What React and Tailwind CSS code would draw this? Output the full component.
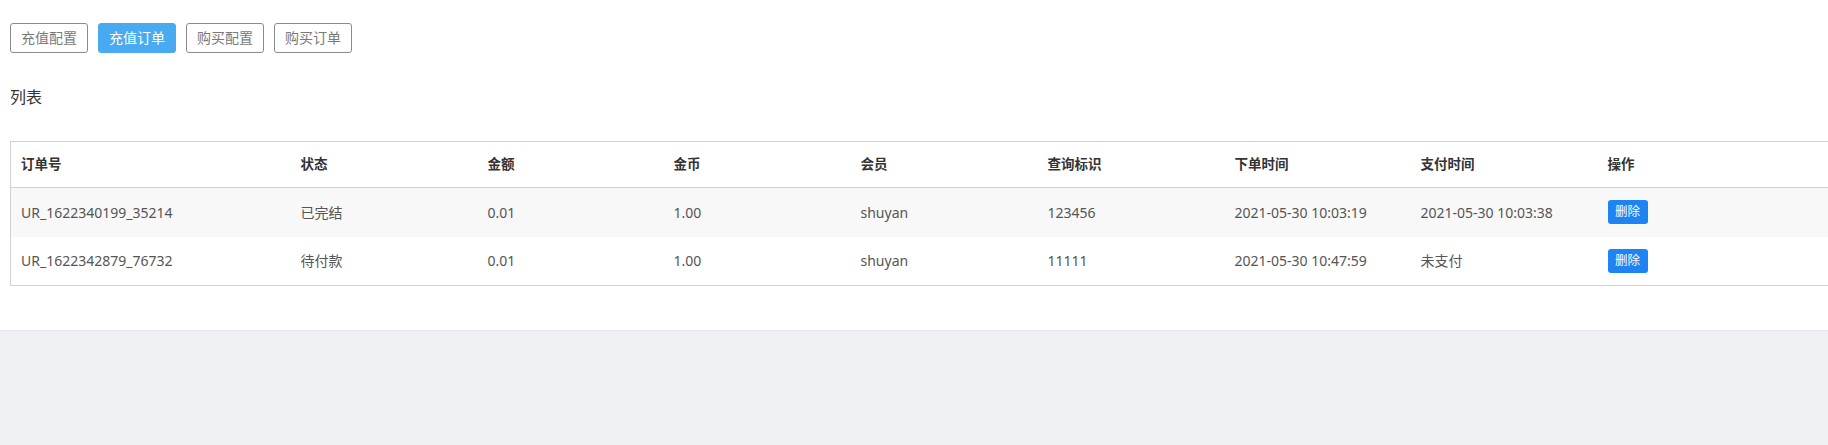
import React from 'react';

const tabs = [
  { label: '充值配置', active: false },
  { label: '充值订单', active: true },
  { label: '购买配置', active: false },
  { label: '购买订单', active: false },
];

const columns = ['订单号', '状态', '金额', '金币', '会员', '查询标识', '下单时间', '支付时间', '操作'];
const widths = ['w-[280px]', 'w-[187px]', 'w-[186px]', 'w-[187px]', 'w-[187px]', 'w-[187px]', 'w-[186px]', 'w-[187px]', 'w-[313px]'];

const orders = [
  { id: 'UR_1622340199_35214', status: '已完结', amount: '0.01', coins: '1.00', member: 'shuyan', tag: '123456', created: '2021-05-30 10:03:19', paid: '2021-05-30 10:03:38' },
  { id: 'UR_1622342879_76732', status: '待付款', amount: '0.01', coins: '1.00', member: 'shuyan', tag: '11111', created: '2021-05-30 10:47:59', paid: '未支付' },
];

const App = () => {
  return (
    <div
      className="min-h-[445px] w-full overflow-hidden bg-[#eef0f4] flex flex-col"
      style={{ fontFamily: '"Noto Sans", "Noto Sans CJK SC", sans-serif' }}
    >
      <div className="bg-white border-b border-[#e5e6ea] pt-[23px] pb-[44px] pl-[10px]">
        {/* Tabs */}
        <div className="flex gap-[10px]">
          {tabs.map((t) => (
            <button
              key={t.label}
              className={`h-[30px] w-[78px] rounded-[3px] text-[14px] leading-none flex items-center justify-center ${
                t.active ? 'bg-[#48abf1] text-white border border-[#48abf1]' : 'bg-white text-[#7a7a7a] border border-[#8c8c8c]'
              }`}
            >
              {t.label}
            </button>
          ))}
        </div>

        {/* Title */}
        <div className="mt-[32px] h-[24px] leading-[24px] text-[16px] text-[#333]">列表</div>

        {/* Table */}
        <div className="mt-[32px] w-[1900px]">
          <table className="table-fixed border-collapse w-[1900px] border border-[#d2d2d2] text-[14px]">
            <colgroup>
              {widths.map((w, i) => (
                <col key={i} className={w} />
              ))}
            </colgroup>
            <thead>
              <tr className="h-[46px] border-b border-[#d2d2d2]">
                {columns.map((c) => (
                  <th key={c} className="text-left font-bold text-[#333] px-[10px] text-[13.5px]">
                    {c}
                  </th>
                ))}
              </tr>
            </thead>
            <tbody>
              {orders.map((o, idx) => (
                <tr key={o.id} className={`h-[49px] ${idx % 2 === 0 ? 'bg-[#f8f8f8]' : 'bg-white'}`}>
                  <td className="px-[10px] text-[#555]">{o.id}</td>
                  <td className="px-[10px] text-[#555]">{o.status}</td>
                  <td className="px-[10px] text-[#555]">{o.amount}</td>
                  <td className="px-[10px] text-[#555]">{o.coins}</td>
                  <td className="px-[10px] text-[#555]">{o.member}</td>
                  <td className="px-[10px] text-[#555]">{o.tag}</td>
                  <td className="px-[10px] text-[#555]">{o.created}</td>
                  <td className="px-[10px] text-[#555]">{o.paid}</td>
                  <td className="px-[10px]">
                    <button className="h-[24px] w-[40px] rounded-[3px] bg-[#1e84f2] text-white text-[12.5px] leading-none flex items-center justify-center">
                      删除
                    </button>
                  </td>
                </tr>
              ))}
            </tbody>
          </table>
        </div>
      </div>
      <div className="flex-1" />
    </div>
  );
};

export default App;
